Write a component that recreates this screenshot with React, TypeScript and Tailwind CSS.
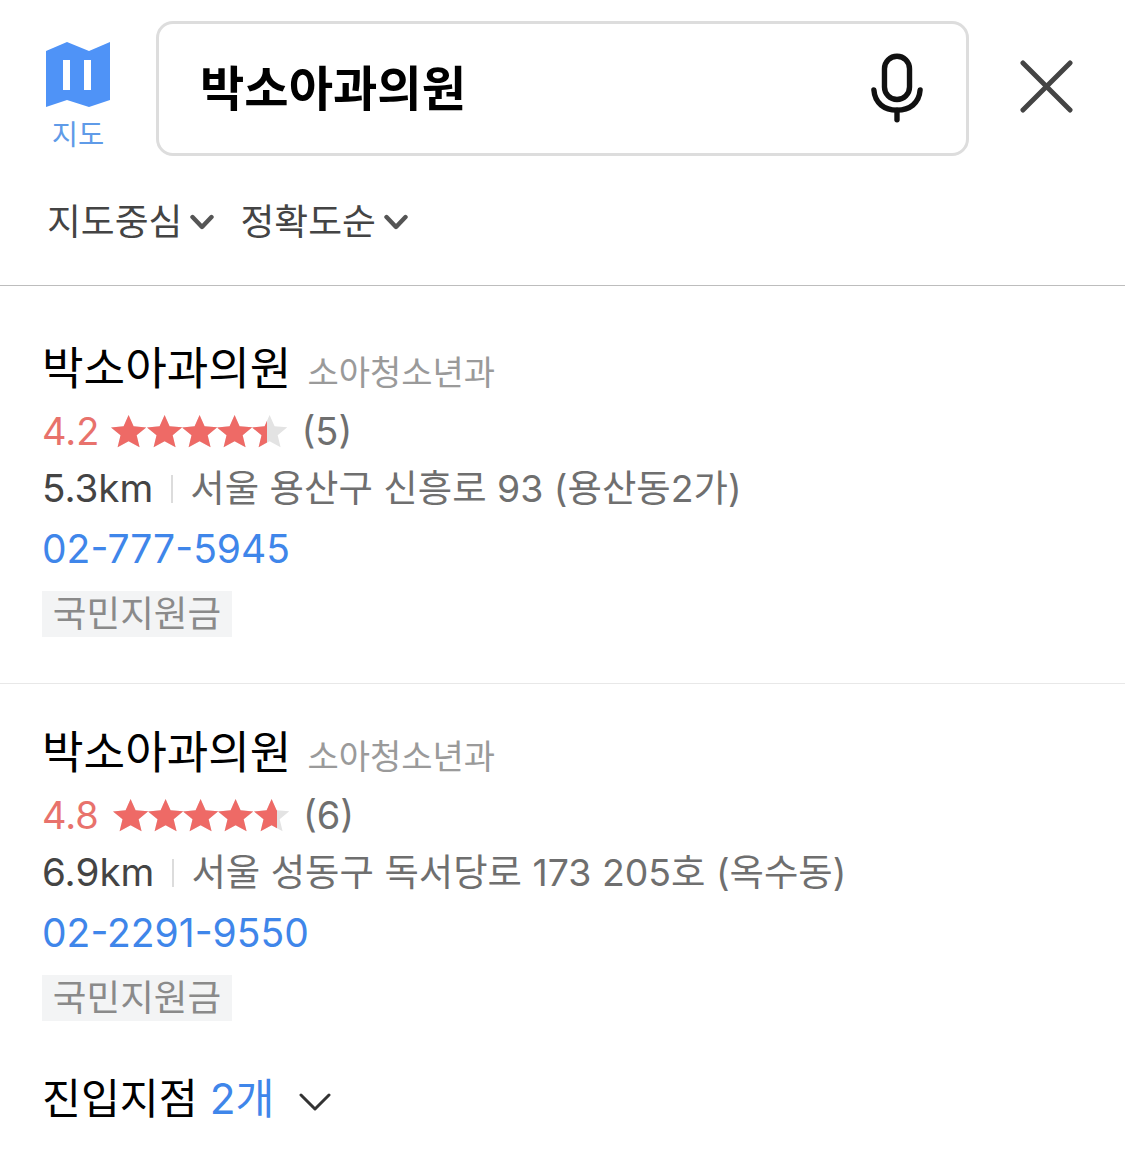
const KO = "font-['Inter','Noto_Sans_CJK_KR',sans-serif]";

const STAR = 'M12 0l3.4 8.2 8.6.8-6.5 5.8 2 8.7L12 19l-7.5 4.5 2-8.7L0 9l8.6-.8z';

function Stars({ fill }: { fill: number }) {
  return (
    <div className="relative w-[176px] h-[33px] shrink-0">
      <div className="absolute inset-0 flex">
        {[0, 1, 2, 3, 4].map(i => (
          <svg key={i} viewBox="0 0 24 24" preserveAspectRatio="none" className="w-[35.2px] h-[33px] fill-[#e3e3e3]"><path d={STAR} /></svg>
        ))}
      </div>
      <div className="absolute inset-y-0 left-0 flex overflow-hidden" style={{ width: `${fill}%` }}>
        {[0, 1, 2, 3, 4].map(i => (
          <svg key={i} viewBox="0 0 24 24" preserveAspectRatio="none" className="w-[35.2px] h-[33px] shrink-0 fill-[#ee6a66]"><path d={STAR} /></svg>
        ))}
      </div>
    </div>
  );
}

function Place({ rating, fill, count, dist, addr, phone, extraTop, starGap }: { rating: number; fill: number; count: number; dist: string; addr: string; phone: string; extraTop: string; starGap: string }) {
  return (
    <div className={`pl-[42px] ${extraTop}`}>
      <div className="flex items-baseline h-[60px]">
        <span className="text-[45.2px] leading-[60px] text-black">박소아과의원</span>
        <span className="ml-[16px] text-[34px] text-[#9a9a9a]">소아청소년과</span>
      </div>
      <div className="flex items-center h-[52px] mt-[6px]">
        <span className="text-[38px] text-[#e8726c]">{rating}</span>
        <span className={starGap} />
        <Stars fill={fill} />
        <span className="ml-[14px] text-[38px] text-[#6f6f6f]">({count})</span>
      </div>
      <div className="flex items-center h-[56px] mt-[4px]">
        <span className="text-[38.6px] text-[#444]">{dist}</span>
        <span className="ml-[18px] w-[2px] h-[28px] bg-[#dcdcdc]" />
        <span className="ml-[17px] text-[37.4px] text-[#6f6f6f] whitespace-nowrap">{addr}</span>
      </div>
      <div className="text-[39px] leading-[56px] h-[56px] mt-[4px] text-[#3f86ea]">{phone}</div>
      <div className="mt-[14px] w-[190px] h-[46px] bg-[#f3f4f5] flex items-center justify-center text-[36.6px] text-[#8a8a8a] whitespace-nowrap">국민지원금</div>
    </div>
  );
}

function Chevron() {
  return (
    <svg viewBox="0 0 24 16" className="w-[24px] h-[16px] ml-[8px]" fill="none" stroke="#555" strokeWidth="4.4" strokeLinecap="round" strokeLinejoin="round">
      <path d="M2.5 3l9.5 10 9.5-10" />
    </svg>
  );
}

export default function App() {
  return (
    <div className={`w-[1125px] h-[1169px] bg-white overflow-hidden ${KO}`}>
      <div className="flex items-start pt-[21px]">
        <div className="w-[156px] pl-[46px] pt-[21px] shrink-0">
          <svg viewBox="0 0 64 66" className="w-[64px] h-[66px]">
            <path fillRule="evenodd" fill="#4f93f7" d="M0 9L21 0l22 9 21-9v58l-21 7-22-7-21 7zM17 18v30h7V18zM38 18v30h7V18z" />
          </svg>
          <div className="w-[64px] text-center text-[28.5px] leading-[36px] mt-[9px] text-[#5f9be8]">지도</div>
        </div>
        <div className="w-[813px] h-[135px] border-[3px] border-[#dddddd] rounded-[17px] flex items-center pl-[41px] pr-[43px] shrink-0">
          <span className="flex-1 text-[48.2px] font-bold text-black mt-[2px]">박소아과의원</span>
          <svg viewBox="0 0 54 72" className="w-[52px] h-[72px] mt-[-1px]" fill="none" stroke="#111" strokeWidth="5.6" strokeLinecap="round">
            <rect x="14" y="3" width="26" height="45" rx="13" />
            <path d="M3 38c1 14 11 21 24 21s23-7 24-21" />
            <path d="M27 59v10" />
          </svg>
        </div>
        <svg viewBox="0 0 54 54" className="w-[53px] h-[53px] ml-[51px] mt-[39px] shrink-0" fill="none" stroke="#444" strokeWidth="5" strokeLinecap="round">
          <path d="M3 3l48 48M51 3L3 51" />
        </svg>
      </div>

      <div className="flex items-center pl-[47px] pt-[2px] h-[130px] border-b border-[#bdbdbd]">
        <div className="flex items-center">
          <span className="text-[36.8px] text-[#444]">지도중심</span>
          <Chevron />
        </div>
        <div className="flex items-center ml-[26px]">
          <span className="text-[36.8px] text-[#444]">정확도순</span>
          <Chevron />
        </div>
      </div>

      <div className="h-[398px] border-b border-[#e8e8e8]">
        <Place rating={4.2} fill={88.5} count={5} dist="5.3km" addr="서울 용산구 신흥로 93 (용산동2가)" phone="02-777-5945" extraTop="pt-[53px]" starGap="w-[12px]" />
      </div>

      <Place rating={4.8} fill={93.5} count={6} dist="6.9km" addr="서울 성동구 독서당로 173 205호 (옥수동)" phone="02-2291-9550" extraTop="pt-[39px]" starGap="w-[14px]" />

      <div className="flex items-center pl-[42px] mt-[48px] h-[60px]">
        <span className="text-[42.3px] text-black">진입지점</span>
        <span className="ml-[12px] text-[42.3px] text-[#3f86ea]">2개</span>
        <svg viewBox="0 0 32 20" className="w-[32px] h-[20px] ml-[25px] mt-[6px]" fill="none" stroke="#333" strokeWidth="3" strokeLinecap="round" strokeLinejoin="round">
          <path d="M2 3l14 14L30 3" />
        </svg>
      </div>
    </div>
  );
}
